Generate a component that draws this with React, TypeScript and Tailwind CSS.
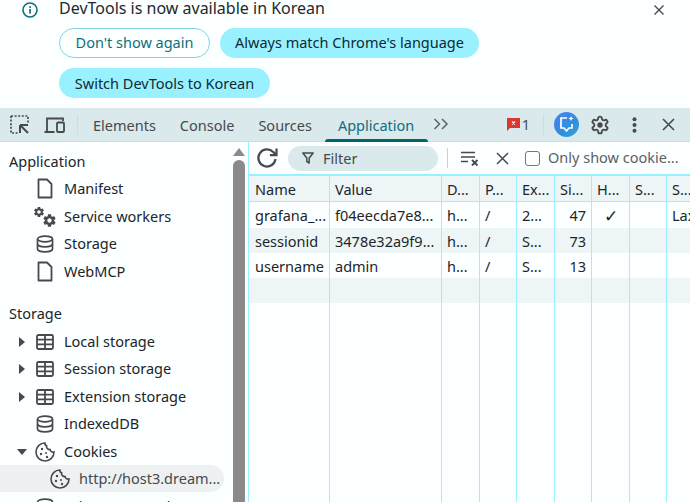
import React from "react";

const GEAR =
  "M19.43 12.98c.04-.32.07-.64.07-.98s-.03-.66-.07-.98l2.11-1.65c.19-.15.24-.42.12-.64l-2-3.46c-.12-.22-.39-.3-.61-.22l-2.49 1c-.52-.4-1.08-.73-1.69-.98l-.38-2.65C14.46 2.18 14.25 2 14 2h-4c-.25 0-.46.18-.49.42l-.38 2.65c-.61.25-1.17.59-1.69.98l-2.49-1c-.23-.09-.49 0-.61.22l-2 3.46c-.13.22-.07.49.12.64l2.11 1.65c-.04.32-.07.65-.07.98s.03.66.07.98l-2.11 1.65c-.19.15-.24.42-.12.64l2 3.46c.12.22.39.3.61.22l2.49-1c.52.4 1.08.73 1.69.98l.38 2.65c.03.24.24.42.49.42h4c.25 0 .46-.18.49-.42l.38-2.65c.61-.25 1.17-.59 1.69-.98l2.49 1c.23.09.49 0 .61-.22l2-3.46c.12-.22.07-.49-.12-.64l-2.11-1.65zM12 15.5c-1.93 0-3.5-1.57-3.5-3.5s1.57-3.5 3.5-3.5 3.5 1.57 3.5 3.5-1.57 3.5-3.5 3.5z";

function FileIcon() {
  return (
    <svg width="16" height="21" viewBox="0 0 16 21" fill="none" stroke="#474a4d" strokeWidth="1.8">
      <path d="M1.5 1.5h8.5l4.5 4.5v13.5h-13z" strokeLinejoin="round" />
    </svg>
  );
}
function DbIcon() {
  return (
    <svg width="18" height="18" viewBox="0 0 18 18" fill="none" stroke="#474a4d" strokeWidth="1.7">
      <ellipse cx="9" cy="4" rx="7.5" ry="2.8" />
      <path d="M1.5 4v10c0 1.6 3.4 2.8 7.5 2.8s7.5-1.2 7.5-2.8V4" />
      <path d="M1.5 9c0 1.6 3.4 2.8 7.5 2.8s7.5-1.2 7.5-2.8" />
    </svg>
  );
}
function TableIcon() {
  return (
    <svg width="18" height="16" viewBox="0 0 18 16" fill="none" stroke="#474a4d" strokeWidth="1.8">
      <rect x="1" y="1" width="16" height="14" rx="1.5" />
      <path d="M1 5.7h16M1 10.3h16M9 1v14" />
    </svg>
  );
}
function CookieIcon() {
  return (
    <svg width="20" height="20" viewBox="0 0 20 20" fill="none" stroke="#474a4d" strokeWidth="1.6">
      <path d="M10 1a9 9 0 1 0 9 9c-2 .6-3.6-.6-3.8-2.4C13 7.8 11.2 6 11.6 3.8 10.4 3.6 9.8 2.4 10 1z" />
      <circle cx="7" cy="7" r="1.2" fill="#474a4d" stroke="none" />
      <circle cx="6" cy="12" r="1.2" fill="#474a4d" stroke="none" />
      <circle cx="11" cy="11" r="1" fill="#474a4d" stroke="none" />
      <circle cx="12" cy="15" r="1.2" fill="#474a4d" stroke="none" />
    </svg>
  );
}
function GearsIcon() {
  return (
    <svg width="24" height="22" viewBox="0 0 24 22" fill="#474a4d">
      <svg x="0" y="0" width="12" height="12" viewBox="0 0 24 24"><path d={GEAR} /></svg>
      <svg x="9" y="7" width="15" height="15" viewBox="0 0 24 24"><path d={GEAR} /></svg>
    </svg>
  );
}
function Caret({ open }: { open?: boolean }) {
  return open ? (
    <svg width="10" height="6" viewBox="0 0 10 6"><path d="M0 0h10L5 6z" fill="#474a4d" /></svg>
  ) : (
    <svg width="6" height="10" viewBox="0 0 6 10"><path d="M0 0v10l6-5z" fill="#474a4d" /></svg>
  );
}

function SideRow({ icon, label, caret, caretOpen, tall }: { icon: React.ReactNode; label: string; caret?: boolean; caretOpen?: boolean; tall?: boolean }) {
  return (
    <div className={`flex items-center ${tall ? "h-[28px] pt-[1px]" : "h-[27px]"}`}>
      <div className="w-[15px] ml-[14px] flex justify-center shrink-0 items-center">
        {caret ? <Caret open={caretOpen} /> : null}
      </div>
      <div className="w-[24px] ml-[4px] flex justify-center shrink-0">{icon}</div>
      <span className="ml-[7px] whitespace-nowrap">{label}</span>
    </div>
  );
}

const cols = [
  { w: "w-[81px]", name: "Name" },
  { w: "w-[112px]", name: "Value" },
  { w: "w-[38px]", name: "D..." },
  { w: "w-[37px]", name: "P..." },
  { w: "w-[38px]", name: "Ex..." },
  { w: "w-[37px]", name: "Si..." },
  { w: "w-[38px]", name: "H..." },
  { w: "w-[37px]", name: "S..." },
  { w: "w-[40px]", name: "S..." },
];

const rows: { cells: string[]; bg: string; h: string }[] = [
  { cells: ["grafana_...", "f04eecda7e8...", "h...", "/", "2...", "47", "✓", "", "Lax"], bg: "bg-[#fbffff]", h: "h-[26px]" },
  { cells: ["sessionid", "3478e32a9f9...", "h...", "/", "S...", "73", "", "", ""], bg: "bg-[#edf5f6]", h: "h-[25px]" },
  { cells: ["username", "admin", "h...", "/", "S...", "13", "", "", ""], bg: "bg-[#fbffff]", h: "h-[25px]" },
  { cells: ["", "", "", "", "", "", "", "", ""], bg: "bg-[#edf5f6]", h: "h-[25px]" },
];

export default function App() {
  return (
    <div className="w-[690px] h-[502px] overflow-hidden flex flex-col bg-[#fbffff] text-[14.5px] text-[#1c2529] font-['Noto_Sans','Open_Sans',sans-serif]">
      {/* Infobar */}
      <div className="h-[108px] shrink-0 flex flex-col relative">
        <div className="flex items-center h-[18px] pl-[22px]">
          <svg width="16" height="16" viewBox="0 0 16 16" fill="none" className="mt-[2px]">
            <circle cx="8" cy="8" r="7" stroke="#0f6f7c" strokeWidth="1.6" />
            <rect x="7.2" y="7" width="1.7" height="4.6" fill="#0f6f7c" />
            <rect x="7.2" y="4.2" width="1.7" height="1.7" fill="#0f6f7c" />
          </svg>
          <span className="ml-[21px] text-[#23282b] text-[16px] leading-none -mt-[2px]">DevTools is now available in Korean</span>
        </div>
        <div className="flex gap-[10px] pl-[59px] mt-[10px]">
          <div className="h-[30px] w-[151px] rounded-full border border-[#7fd5e4] flex items-center justify-center text-[#0f6f7c]">Don't show again</div>
          <div className="h-[30px] w-[259px] rounded-full bg-[#99f1ff] flex items-center justify-center text-[#0f2a33]">Always match Chrome's language</div>
        </div>
        <div className="flex pl-[59px] mt-[10px]">
          <div className="h-[30px] w-[211px] pt-[1px] rounded-full bg-[#99f1ff] flex items-center justify-center text-[#0f2a33]">Switch DevTools to Korean</div>
        </div>
        <svg width="12" height="12" viewBox="0 0 12 12" className="absolute right-[25px] top-[4px]" stroke="#474a4d" strokeWidth="1.4" fill="none">
          <path d="M1.5 1.5l9 9M10.5 1.5l-9 9" />
        </svg>
      </div>

      {/* Toolbar */}
      <div className="h-[34px] shrink-0 bg-[#d9e9ec] border-b border-[#99f1ff] flex items-center text-[#474a4d] relative">
        <svg width="20" height="20" viewBox="0 0 20 20" fill="none" className="ml-[10px]">
          <path d="M1 1h17v7M1 1v17h7" stroke="#474a4d" strokeWidth="1.7" strokeDasharray="2 1.6" />
          <path d="M10 10h8M10 10v8M10 10l8 8" stroke="#474a4d" strokeWidth="2" />
        </svg>
        <svg width="22" height="18" viewBox="0 0 22 18" fill="none" className="ml-[14px]">
          <path d="M0.5 16h10M3 16V2.5h16V5" stroke="#474a4d" strokeWidth="1.8" />
          <rect x="13" y="6.5" width="7" height="9.5" rx="1" stroke="#474a4d" strokeWidth="1.8" />
        </svg>
        <div className="w-px h-[20px] bg-[#b5e6ef] ml-[11px]" />
        <div className="ml-[15px] flex items-center gap-[24px] text-[#474a4d] pt-[2px]">
          <span>Elements</span>
          <span>Console</span>
          <span>Sources</span>
          <span className="text-[#0f6f7c] ml-[2px]">Application</span>
        </div>
        <div className="absolute left-[325px] w-[103px] bottom-[-1px] h-[3px] bg-[#00646f] rounded-t-[3px]" />
        <svg width="16" height="12" viewBox="0 0 16 12" fill="none" stroke="#5d6164" strokeWidth="1.5" className="ml-[19px] -mt-[2px]">
          <path d="M1.5 1l5 5-5 5M9 1l5 5-5 5" />
        </svg>
        <div className="flex-1" />
        <svg width="13" height="13" viewBox="0 0 13 13">
          <path d="M0 0h13v10H3l-3 3z" fill="#dc362e" />
          <path d="M5 3.5l3 3M8 3.5l-3 3" stroke="#fff" strokeWidth="1.2" />
        </svg>
        <span className="ml-[2px] text-[#474a4d]">1</span>
        <div className="w-px h-[20px] bg-[#b5e6ef] ml-[13px]" />
        <div className="w-[25px] h-[25px] rounded-full bg-[linear-gradient(135deg,#4c7ef3,#2f8fe0_60%,#3aa6d8)] ml-[10px] flex items-center justify-center">
          <svg width="15" height="17" viewBox="0 0 15 17" fill="none">
            <path d="M8 2H2v10h3l2.5 3 2.5-3h3V8" stroke="#fff" strokeWidth="1.7" />
            <path d="M12 0l.8 1.7 1.7.8-1.7.8-.8 1.7-.8-1.7-1.7-.8 1.7-.8z" fill="#fff" />
          </svg>
        </div>
        <svg width="20" height="20" viewBox="0 0 24 24" fill="none" stroke="#474a4d" strokeWidth="2.2" className="ml-[11px]">
          <path d="M12.2 2h-.4a2 2 0 0 0-2 2v.2a2 2 0 0 1-1 1.7l-.4.3a2 2 0 0 1-2 0l-.2-.1a2 2 0 0 0-2.7.7l-.2.4a2 2 0 0 0 .7 2.7l.2.1a2 2 0 0 1 1 1.7v.5a2 2 0 0 1-1 1.8l-.2.1a2 2 0 0 0-.7 2.7l.2.4a2 2 0 0 0 2.7.7l.2-.1a2 2 0 0 1 2 0l.4.3a2 2 0 0 1 1 1.7v.2a2 2 0 0 0 2 2h.4a2 2 0 0 0 2-2v-.2a2 2 0 0 1 1-1.7l.4-.3a2 2 0 0 1 2 0l.2.1a2 2 0 0 0 2.7-.7l.2-.4a2 2 0 0 0-.7-2.7l-.2-.1a2 2 0 0 1-1-1.8v-.5a2 2 0 0 1 1-1.7l.2-.1a2 2 0 0 0 .7-2.7l-.2-.4a2 2 0 0 0-2.7-.7l-.2.1a2 2 0 0 1-2 0l-.4-.3a2 2 0 0 1-1-1.7V4a2 2 0 0 0-2-2z" />
          <circle cx="12" cy="12" r="3.2" fill="#474a4d" stroke="none" />
        </svg>
        <svg width="5" height="16" viewBox="0 0 5 16" className="ml-[22px]" fill="#474a4d">
          <circle cx="2.5" cy="2.2" r="2" />
          <circle cx="2.5" cy="8" r="2" />
          <circle cx="2.5" cy="13.8" r="2" />
        </svg>
        <svg width="13" height="13" viewBox="0 0 13 13" fill="none" stroke="#474a4d" strokeWidth="1.6" className="ml-[25px] mr-[15px]">
          <path d="M1 1l11 11M12 1L1 12" />
        </svg>
      </div>

      {/* Body */}
      <div className="flex-1 flex min-h-0">
        {/* Sidebar */}
        <div className="w-[233px] shrink-0 overflow-hidden pt-[6px]">
          <div className="h-[27px] pl-[9px] flex items-center">Application</div>
          <SideRow icon={<FileIcon />} label="Manifest" />
          <SideRow icon={<GearsIcon />} label="Service workers" tall />
          <SideRow icon={<DbIcon />} label="Storage" />
          <SideRow icon={<FileIcon />} label="WebMCP" tall />
          <div className="h-[15px]" />
          <div className="h-[27px] pl-[9px] flex items-center">Storage</div>
          <SideRow icon={<TableIcon />} label="Local storage" caret tall />
          <SideRow icon={<TableIcon />} label="Session storage" caret />
          <SideRow icon={<TableIcon />} label="Extension storage" caret tall />
          <SideRow icon={<DbIcon />} label="IndexedDB" />
          <SideRow icon={<CookieIcon />} label="Cookies" caret caretOpen tall />
          <div className="flex items-center h-[27px] w-[224px] rounded-r-full bg-[#edf1f2]">
            <div className="ml-[50px] w-[20px] flex justify-center shrink-0"><CookieIcon /></div>
            <span className="ml-[9px] whitespace-nowrap text-[#474a4d]">http://host3.dream...</span>
          </div>
          <SideRow icon={<DbIcon />} label="Private state tokens" tall />
        </div>
        {/* Scrollbar */}
        <div className="w-[12px] shrink-0 flex flex-col items-center pt-[6px] bg-[#fbffff]">
          <svg width="12" height="8" viewBox="0 0 12 8"><path d="M6 0l6 8H0z" fill="#8a8a8a" /></svg>
          <div className="w-[12px] flex-1 bg-[#8a8a8a] rounded-t-full mt-[4px]" />
        </div>
        <div className="w-[3px] shrink-0 bg-[#fbffff]" />
        {/* Main */}
        <div className="flex-1 min-w-0 border-l border-[#99f1ff] flex flex-col">
          <div className="h-[34px] shrink-0 flex items-center border-b-[2px] border-[#99f1ff]">
            <svg width="24" height="24" viewBox="0 0 24 24" fill="none" stroke="#474a4d" strokeWidth="2.2" className="ml-[6px]">
              <path d="M20.5 13a8.6 8.6 0 1 1-2.4-7.1L21 8.5" />
              <path d="M21.5 2.5v6.6h-6.6" fill="none" />
            </svg>
            <div className="ml-[9px] w-[150px] h-[25px] rounded-full bg-[#d9e9ec] flex items-center pl-[14px] text-[#474a4d]">
              <svg width="12" height="12" viewBox="0 0 12 12" fill="none" stroke="#474a4d" strokeWidth="1.5">
                <path d="M0.8 1h10.4L7.2 6v5L4.8 9.5V6z" strokeLinejoin="round" />
              </svg>
              <span className="ml-[9px] mt-[1px]">Filter</span>
            </div>
            <div className="w-px h-[20px] bg-[#99e6f2] ml-[9px]" />
            <svg width="20" height="15" viewBox="0 0 20 15" fill="none" stroke="#474a4d" strokeWidth="1.7" className="ml-[13px]">
              <path d="M0 1.5h14M0 6h14M0 10.5h7" />
              <path d="M11 9l5.5 5.5M16.5 9L11 14.5" strokeWidth="1.9" />
            </svg>
            <svg width="13" height="13" viewBox="0 0 13 13" fill="none" stroke="#474a4d" strokeWidth="1.5" className="ml-[15px]">
              <path d="M1 1l11 11M12 1L1 12" />
            </svg>
            <div className="ml-[16px] w-[15px] h-[15px] rounded-[3px] border border-[#74787b] bg-white shrink-0" />
            <span className="ml-[8px] text-[#5c6164] whitespace-nowrap">Only show cookie...</span>
          </div>
          <div className="flex h-[26px] shrink-0 bg-[#edf5f6] border-b border-[#99f1ff]">
            {cols.map((c, i) => (
              <div key={i} className={`${c.w} shrink-0 ${i === 0 ? "pl-[6px] pr-[5px]" : "px-[5px]"} pt-[2px] flex items-center overflow-hidden whitespace-nowrap ${i < cols.length - 1 ? "border-r border-[#99f1ff]" : ""}`}>
                {c.name}
              </div>
            ))}
          </div>
          <div className="flex-1 relative">
            {rows.map((r, ri) => (
              <div key={ri} className={`flex ${r.h} ${r.bg}`}>
                {r.cells.map((t, i) => (
                  <div
                    key={i}
                    className={`${cols[i].w} shrink-0 ${i === 0 ? "pl-[6px] pr-[3px]" : "px-[5px]"} pt-[2px] flex items-center overflow-hidden whitespace-nowrap ${i === 5 ? "justify-end pr-[6px]" : ""} ${i === 6 ? "justify-center text-[17px]" : ""}`}
                  >
                    {t}
                  </div>
                ))}
              </div>
            ))}
            <div className="absolute inset-0 flex pointer-events-none">
              {cols.map((c, i) => (
                <div key={i} className={`${c.w} shrink-0 ${i < cols.length - 1 ? "border-r border-[#99f1ff]" : ""}`} />
              ))}
            </div>
          </div>
        </div>
      </div>
    </div>
  );
}
